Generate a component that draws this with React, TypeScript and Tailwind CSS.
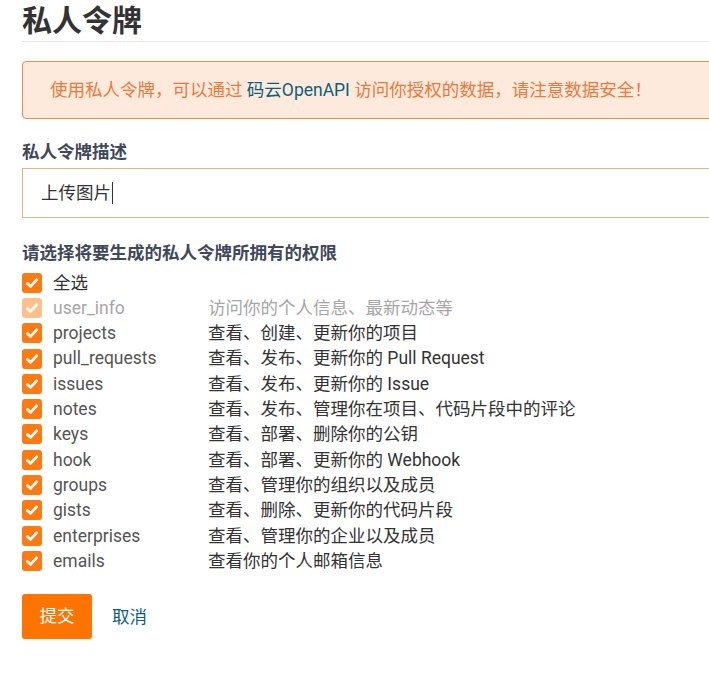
import React from "react";

const rows: { name: string; desc: string; disabled?: boolean }[] = [
  { name: "user_info", desc: "访问你的个人信息、最新动态等", disabled: true },
  { name: "projects", desc: "查看、创建、更新你的项目" },
  { name: "pull_requests", desc: "查看、发布、更新你的 Pull Request" },
  { name: "issues", desc: "查看、发布、更新你的 Issue" },
  { name: "notes", desc: "查看、发布、管理你在项目、代码片段中的评论" },
  { name: "keys", desc: "查看、部署、删除你的公钥" },
  { name: "hook", desc: "查看、部署、更新你的 Webhook" },
  { name: "groups", desc: "查看、管理你的组织以及成员" },
  { name: "gists", desc: "查看、删除、更新你的代码片段" },
  { name: "enterprises", desc: "查看、管理你的企业以及成员" },
  { name: "emails", desc: "查看你的个人邮箱信息" },
];

function Check({ disabled }: { disabled?: boolean }) {
  return (
    <span
      className={
        "flex h-[20px] w-[20px] shrink-0 items-center justify-center rounded-[3px] " +
        (disabled ? "bg-[#fcc08c]" : "bg-[#fb7a12]")
      }
    >
      <svg width="14" height="14" viewBox="0 0 14 14">
        <polyline
          points="2.4,7.4 5.6,10.4 11.6,3.8"
          fill="none"
          stroke="#ffffff"
          strokeWidth="2.7"
          strokeLinecap="round"
          strokeLinejoin="round"
        />
      </svg>
    </span>
  );
}

export default function App() {
  return (
    <div
      className="min-h-screen w-full overflow-hidden bg-white"
      style={{ fontFamily: 'Roboto, "Noto Sans CJK SC", sans-serif' }}
    >
      <div className="w-[760px] pl-[22px]">
        <div className="flex h-[42px] items-center border-b border-[#e6e6e6]">
          <h1 className="text-[30px] font-bold leading-[40px] text-[#333]">私人令牌</h1>
        </div>
        <div className="mt-[19px] flex h-[58px] items-center rounded-[4px] border border-[#ef8c4c] bg-[#fdeadc] pl-[27px] text-[17.5px] text-[#e9793a]">
          <span>
            使用私人令牌，可以通过 <span className="text-[#0b5f7d]">码云OpenAPI</span> 访问你授权的数据，请注意数据安全！
          </span>
        </div>
        <div className="mt-[21px] text-[17.5px] font-bold leading-[24px] text-[#40485b]">私人令牌描述</div>
        <div className="mt-[4px] flex h-[50px] items-center border border-[#ebb583] pl-[18px] text-[17.5px] text-[#333]">
          <span>上传图片</span>
          <span className="ml-[1px] h-[22px] w-[1px] bg-[#333]" />
        </div>
        <div className="mt-[23px] text-[17.5px] font-bold leading-[24px] text-[#40485b]">
          请选择将要生成的私人令牌所拥有的权限
        </div>
        <div className="mt-[5px] flex flex-col text-[17.5px]">
          <div className="flex h-[25.3px] items-center">
            <Check />
            <span className="ml-[11px] text-[#333]">全选</span>
          </div>
          {rows.map((r) => (
            <div key={r.name} className="flex h-[25.3px] items-center">
              <Check disabled={r.disabled} />
              <span className={"ml-[11px] w-[155px] " + (r.disabled ? "text-[#a6a6a6]" : "text-[#555]")}>
                {r.name}
              </span>
              <span className={r.disabled ? "text-[#a6a6a6]" : "text-[#333]"}>{r.desc}</span>
            </div>
          ))}
        </div>
        <div className="mt-[20px] flex items-center">
          <button className="flex h-[45px] w-[70px] items-center justify-center rounded-[3px] bg-[#ff7300] text-[17.5px] text-white">
            提交
          </button>
          <span className="ml-[20px] pt-[2px] text-[17.5px] text-[#0b5f7d]">取消</span>
        </div>
      </div>
    </div>
  );
}
